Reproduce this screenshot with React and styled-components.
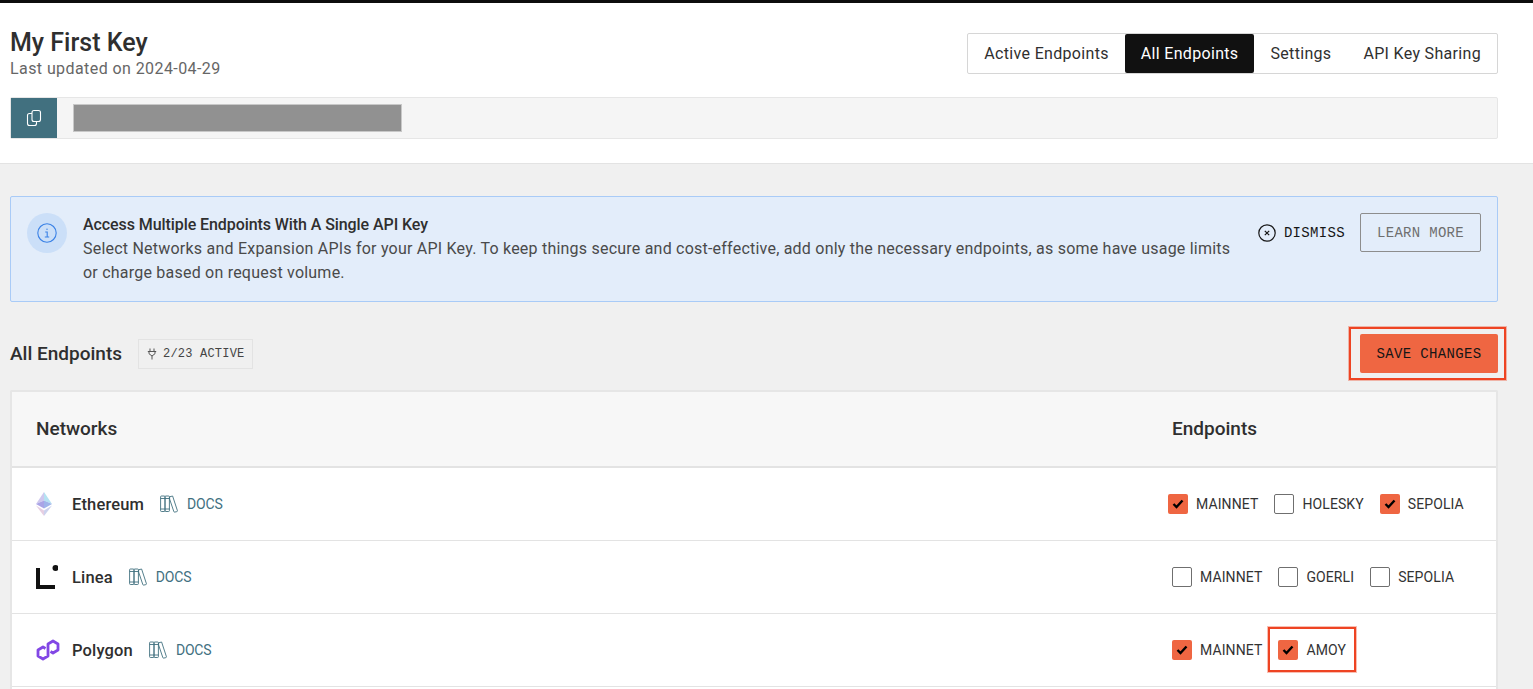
import styled, { createGlobalStyle } from 'styled-components'

const sans = `Roboto, "Noto Sans", "Liberation Sans", sans-serif`
const mono = `"Liberation Mono", "DejaVu Sans Mono", monospace`

const networks = [
  {
    name: 'Ethereum',
    logo: 'eth',
    shift: -4,
    endpoints: [
      { label: 'MAINNET', checked: true },
      { label: 'HOLESKY' },
      { label: 'SEPOLIA', checked: true },
    ],
  },
  {
    name: 'Linea',
    logo: 'linea',
    endpoints: [{ label: 'MAINNET' }, { label: 'GOERLI' }, { label: 'SEPOLIA' }],
  },
  {
    name: 'Polygon',
    logo: 'polygon',
    endpoints: [
      { label: 'MAINNET', checked: true },
      { label: 'AMOY', checked: true, marked: true },
    ],
  },
]

const CopyIcon = () => (
  <svg width="16" height="18" viewBox="0 0 16 18" fill="none" stroke="#fff" strokeWidth="1.1">
    <rect x="6" y="1.5" width="8.5" height="11" rx="2" />
    <path d="M6 4.5H3.5a2 2 0 0 0-2 2v8a2 2 0 0 0 2 2h5a2 2 0 0 0 2-2v-2" />
  </svg>
)

const InfoIcon = () => (
  <svg width="20" height="20" viewBox="0 0 20 20" fill="none" stroke="#3b82e6" strokeWidth="1.1">
    <circle cx="10" cy="10" r="9.2" />
    <path d="M8.2 9h2v5M7.8 14h4.4" />
    <circle cx="10" cy="6.2" r=".7" fill="#3b82e6" stroke="none" />
  </svg>
)

const DismissIcon = () => (
  <svg width="18" height="18" viewBox="0 0 18 18" fill="none" stroke="#161616" strokeWidth="1.2">
    <circle cx="9" cy="9" r="8.200" />
    <path d="M6.800 6.800l4.400 4.400M11.200 6.800l-4.400 4.400" />
  </svg>
)

const PlugIcon = () => (
  <svg width="10" height="12" viewBox="0 0 10 12" fill="none" stroke="#555" strokeWidth="1">
    <path d="M3 .5v3M7 .5v3M.8 3.500h8.400M2 3.500v2.200L5 8l3-2.300V3.500M5 8v3.500" />
  </svg>
)

const BooksIcon = () => (
  <svg width="18" height="18" viewBox="0 0 18 18" fill="none" stroke="#41707f" strokeWidth=".9">
    <rect x=".6" y="1" width="4.400" height="15.500" rx=".8" />
    <rect x="5" y="1" width="4.400" height="15.500" rx=".8" />
    <path d="M.6 14h8.800M.6 3.500h8.800" />
    <path d="M9.600 1.800l3-.8 4.800 14.600a.8.8 0 0 1-.6 1l-2 .5a.8.8 0 0 1-1-.6L9.600 4z" />
  </svg>
)

const EthLogo = () => (
  <svg width="16" height="24" viewBox="0 0 16 24">
    <path d="M8 0L0 12l8-3.600z" fill="#cfc8ee" />
    <path d="M8 0l8 12-8-3.600z" fill="#b5e2f2" />
    <path d="M8 8.400L0 12l8 4.600z" fill="#aaa4e6" />
    <path d="M8 8.400l8 3.600-8 4.600z" fill="#9fb4ea" />
    <path d="M0 13.600L8 24v-5.600z" fill="#e6cfe2" />
    <path d="M16 13.600L8 24v-5.600z" fill="#ccd2ee" />
  </svg>
)

const LineaLogo = () => (
  <svg width="22" height="24" viewBox="0 0 22 24" fill="#111">
    <path d="M0 3h4v17h15v4H0z" />
    <circle cx="19.500" cy="3" r="3" />
  </svg>
)

const PolygonLogo = () => (
  <svg width="24" height="22" viewBox="1 0 24 22" fill="none" stroke="#8247e5" strokeWidth="2.800" strokeLinejoin="round">
    <path d="M10.500 9.500L8 8l-5 3v6l5 3 5-3V5l5-3 5 3v6l-5 3-2.500-1.500" />
  </svg>
)

const logos = { eth: EthLogo, linea: LineaLogo, polygon: PolygonLogo }

const Endpoint = ({ label, checked, marked }) => (
  <EndpointItem>
    <CheckBox $checked={checked}>
      {checked && (
        <svg width="12" height="10" viewBox="0 0 12 10" fill="none" stroke="#000" strokeWidth="2.400">
          <path d="M1.500 5l3 3 6-6.500" />
        </svg>
      )}
    </CheckBox>
    <EndpointLabel>{label}</EndpointLabel>
    {marked && <AmoyMark />}
  </EndpointItem>
)

const App = () => {
  return (
    <Page>
      <GlobalStyle />
      <Header>
        <HeaderTop>
          <div>
            <Title>My First Key</Title>
            <Updated>Last updated on 2024-04-29</Updated>
          </div>
          <Tabs>
            <Tab>Active Endpoints</Tab>
            <Tab $active>All Endpoints</Tab>
            <Tab>Settings</Tab>
            <Tab>API Key Sharing</Tab>
          </Tabs>
        </HeaderTop>
        <KeyBar>
          <CopyButton>
            <CopyIcon />
          </CopyButton>
          <KeyMask />
        </KeyBar>
      </Header>

      <Content>
        <Banner>
          <InfoBubble>
            <InfoIcon />
          </InfoBubble>
          <BannerText>
            <BannerTitle>Access Multiple Endpoints With A Single API Key</BannerTitle>
            <BannerBody>
              Select Networks and Expansion APIs for your API Key. To keep things secure and cost-effective, add only the necessary endpoints, as some have usage limits or charge based on request volume.
            </BannerBody>
          </BannerText>
          <BannerActions>
            <Dismiss>
              <DismissIcon />
              DISMISS
            </Dismiss>
            <LearnMore>LEARN MORE</LearnMore>
          </BannerActions>
        </Banner>

        <SectionBar>
          <SectionTitle>All Endpoints</SectionTitle>
          <ActiveBadge>
            <PlugIcon />
            2/23 ACTIVE
          </ActiveBadge>
          <SaveWrap>
            <SaveButton>SAVE CHANGES</SaveButton>
            <SaveMark />
          </SaveWrap>
        </SectionBar>

        <Table>
          <HeadRow>
            <span>Networks</span>
            <span>Endpoints</span>
          </HeadRow>
          {networks.map(network => {
            const Logo = logos[network.logo]
            return (
              <Row key={network.name}>
                <NetworkCell>
                  <LogoSlot>
                    <Logo />
                  </LogoSlot>
                  <NetworkName>{network.name}</NetworkName>
                  <Docs>
                    <BooksIcon />
                    DOCS
                  </Docs>
                </NetworkCell>
                <EndpointList $shift={network.shift || 0}>
                  {network.endpoints.map(endpoint => (
                    <Endpoint key={endpoint.label} {...endpoint} />
                  ))}
                </EndpointList>
              </Row>
            )
          })}
          <Row />
        </Table>
      </Content>
    </Page>
  )
}

export default App

const GlobalStyle = createGlobalStyle`
  html, body {
    margin: 0;
    height: 100%;
    overflow: hidden;
    background: #f0f0f0;
  }

  body {
    font-family: ${sans};
    color: #2f2f2f;
  }

  * {
    box-sizing: border-box;
  }
`

const Page = styled.div`
  border-top: 3px solid #0d0d0d;
  height: 100vh;
  overflow: hidden;
`

const Header = styled.header`
  height: 161px;
  background: #fff;
  border-bottom: 1px solid #e3e3e3;
  padding: 27px 35px 0 10px;
`

const HeaderTop = styled.div`
  display: flex;
  justify-content: space-between;
  align-items: flex-start;
  height: 67px;
`

const Title = styled.h1`
  margin: 1px 0 0;
  font-size: 25px;
  line-height: 24px;
  font-weight: 500;
  color: #2f2f2f;
`

const Updated = styled.div`
  margin-top: 4px;
  font-size: 16px;
  line-height: 20px;
  letter-spacing: .42px;
  color: #666;
`

const Tabs = styled.div`
  display: flex;
  height: 41px;
  margin-top: 3px;
  background: #fff;
  border: 1px solid #d6d6d6;
  border-radius: 2px;
`

const Tab = styled.div`
  display: flex;
  align-items: center;
  padding: 0 16px;
  font-size: 16px;
  letter-spacing: .32px;
  border-radius: 2px;
  color: ${props => (props.$active ? '#fff' : '#2f2f2f')};
  background: ${props => (props.$active ? '#111' : 'transparent')};
`

const KeyBar = styled.div`
  display: flex;
  align-items: center;
  height: 42px;
  background: #f5f5f5;
  border: 1px solid #e6e6e6;
  border-radius: 2px;
`

const CopyButton = styled.div`
  display: flex;
  align-items: center;
  justify-content: center;
  width: 46px;
  height: 40px;
  background: #41707f;
`

const KeyMask = styled.div`
  width: 329px;
  height: 28px;
  margin-left: 16px;
  background: #919191;
  border: 1px solid #c8c8c8;
`

const Content = styled.main`
  padding: 32px 35px 0 10px;
`

const Banner = styled.section`
  display: flex;
  align-items: flex-start;
  height: 106px;
  padding: 16px;
  background: #e3edfa;
  border: 1px solid #a9cbf7;
  border-radius: 2px;
`

const InfoBubble = styled.div`
  flex: none;
  display: flex;
  align-items: center;
  justify-content: center;
  width: 40px;
  height: 40px;
  border-radius: 50%;
  background: #cbdff8;
`

const BannerText = styled.div`
  flex: none;
  width: 1155px;
  margin-left: 16px;
  font-size: 16px;
  line-height: 24px;
`

const BannerTitle = styled.div`
  font-weight: 500;
  letter-spacing: -.08px;
`

const BannerBody = styled.div`
  letter-spacing: .22px;
  color: #4a4a4a;
`

const BannerActions = styled.div`
  display: flex;
  align-items: center;
  gap: 15px;
  margin-left: auto;
`

const Dismiss = styled.div`
  display: flex;
  align-items: center;
  gap: 8px;
  font-family: ${mono};
  font-size: 14px;
  letter-spacing: .33px;
  color: #161616;
`

const LearnMore = styled.div`
  display: flex;
  align-items: center;
  justify-content: center;
  width: 121px;
  height: 39px;
  font-family: ${mono};
  font-size: 14px;
  letter-spacing: .3px;
  color: #6f6f6f;
  border: 1px solid #8d8d8d;
  border-radius: 2px;
`

const SectionBar = styled.div`
  display: flex;
  align-items: center;
  height: 39px;
  margin: 32px 0 17px;
`

const SectionTitle = styled.h2`
  margin: 0;
  font-size: 19px;
  font-weight: 500;
`

const ActiveBadge = styled.div`
  display: flex;
  align-items: center;
  gap: 6px;
  height: 30px;
  margin-left: 16px;
  padding: 0 8px;
  font-family: ${mono};
  font-size: 12px;
  letter-spacing: .2px;
  color: #444;
  border: 1px solid #e3e3e3;
`

const SaveWrap = styled.div`
  position: relative;
  margin-left: auto;
`

const SaveButton = styled.div`
  display: flex;
  align-items: center;
  justify-content: center;
  width: 138px;
  height: 39px;
  font-family: ${mono};
  font-size: 14px;
  letter-spacing: .33px;
  color: #161616;
  background: #ef6642;
  border-radius: 2px;
`

const SaveMark = styled.div`
  position: absolute;
  inset: -7px -8px -7px -11px;
  border: 2px solid #ee4423;
  box-shadow: 0 0 0 1px rgba(238, 68, 35, .35);
`

const Table = styled.div`
  background: #fff;
  border: 2px solid #e6e6e6;
  border-bottom: none;
  border-radius: 2px 2px 0 0;
`

const HeadRow = styled.div`
  display: grid;
  grid-template-columns: 1136px 1fr;
  align-items: center;
  height: 76px;
  padding-left: 24px;
  padding-bottom: 1px;
  font-size: 19px;
  line-height: 22px;
  font-weight: 500;
  background: #f7f7f7;
  border-bottom: 2px solid #e3e3e3;
`

const Row = styled.div`
  display: grid;
  grid-template-columns: 1136px 1fr;
  align-items: center;
  height: 73px;
  padding-left: 24px;
  border-bottom: 1px solid #e3e3e3;
`

const NetworkCell = styled.div`
  display: flex;
  align-items: center;
`

const LogoSlot = styled.div`
  display: flex;
  align-items: center;
  width: 24px;
  margin-right: 12px;
`

const NetworkName = styled.div`
  font-size: 16.500px;
  letter-spacing: .15px;
  font-weight: 500;
`

const Docs = styled.div`
  display: flex;
  align-items: center;
  gap: 9px;
  margin-left: 16px;
  font-size: 14px;
  letter-spacing: -.2px;
  color: #41707f;
`

const EndpointList = styled.div`
  display: flex;
  gap: 16px;
  margin-left: ${props => props.$shift}px;
`

const EndpointItem = styled.div`
  position: relative;
  display: flex;
  align-items: center;
  gap: 8px;
`

const CheckBox = styled.div`
  display: flex;
  align-items: center;
  justify-content: center;
  width: 20px;
  height: 20px;
  border-radius: 2px;
  background: ${props => (props.$checked ? '#ef6642' : '#fff')};
  border: ${props => (props.$checked ? 'none' : '1px solid #6f6f6f')};
`

const EndpointLabel = styled.span`
  font-size: 14px;
  letter-spacing: .1px;
  color: #333;
`

const AmoyMark = styled.div`
  position: absolute;
  inset: -13px -10px -12px -10px;
  border: 2px solid #ee4423;
  box-shadow: 0 0 0 1px rgba(238, 68, 35, .35);
`
